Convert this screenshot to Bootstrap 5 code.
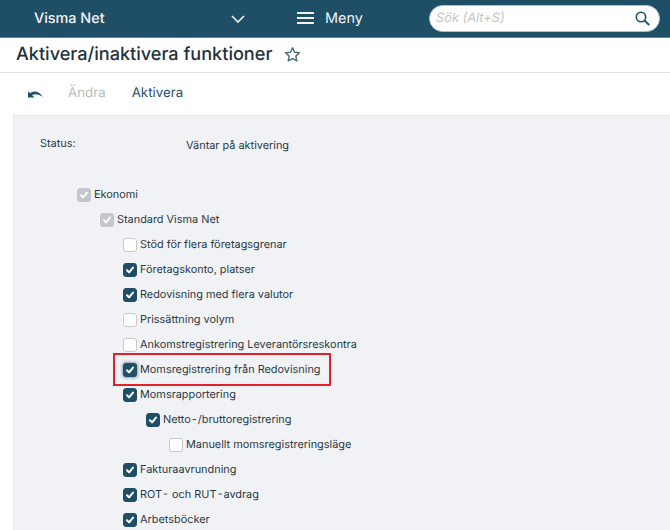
<!DOCTYPE html>
<html lang="sv">
  <head>
    <meta charset="UTF-8" />
    <meta name="viewport" content="width=device-width, initial-scale=1.0" />
    <title>Aktivera/inaktivera funktioner</title>
    <link href="https://cdn.jsdelivr.net/npm/bootstrap@5.3.0/dist/css/bootstrap.min.css" rel="stylesheet" />
    <script src="https://cdn.jsdelivr.net/npm/bootstrap@5.3.0/dist/js/bootstrap.bundle.min.js"></script>
    <style>
      html, body { height: 530px; overflow: hidden; }
      body { font-family: Inter, "Liberation Sans", sans-serif; color: #2b3a45; background: #fff; text-rendering: geometricPrecision; }
      .topbar { height: 38px; background: #1f4e67; border-bottom: 1px solid #5f8296; color: #f2f2f2; font-size: 14.4px; padding: 0 10px 0 34px; }
      .brand-name { width: 197px; font-weight: 500; }
      .menu-btn { margin-left: 52px; gap: 11px; }
      .search-box { width: 231px; height: 27px; background: #fff; border: 1px solid #a9c3d3; border-radius: 14px; padding: 0 9px 0 6px; margin-left: auto; }
      .search-box span { color: #c4c4c4; font-size: 12.8px; font-style: italic; }
      .title-row { height: 35px; border-bottom: 1px solid #e2e2e2; padding: 0 0 1px 16px; }
      .title-row h1 { font-size: 18.1px; font-weight: 500; margin: 0; color: #22323d; }
      .tool-row { height: 42px; padding: 0 0 1px 28px; font-size: 13.3px; }
      .tool-off { color: #bdbdbd; margin-left: 25px; }
      .tool-on { color: #2d4f66; margin-left: 26px; }
      .main-panel { height: 415px; margin-left: 13px; background: #f1f2f5; border-top: 1px solid #e6e7ea; border-left: 1px solid #e6e7ea; font-size: 10.9px; overflow: hidden; }
      .status-row { height: 66px; padding: 20px 0 0 26px; }
      .status-label { width: 146px; margin-top: -1px; }
      .status-value { width: 117px; height: 24px; border-bottom: 1px solid #f5f5f7; margin-top: 1px; }
      .tree-row { height: 25px; line-height: 25px; }
      .lvl-1 { padding-left: 63px; }
      .lvl-2 { padding-left: 86px; }
      .lvl-3 { padding-left: 109px; }
      .lvl-4 { padding-left: 132px; }
      .lvl-5 { padding-left: 155px; }
      .tree-row .form-check-input { width: 14px; height: 14px; margin: 0 3px 0 0; border-color: #c9c9c9; border-radius: 3px; flex: none; position: relative; top: 0.5px; background-size: 100%; }
      .tree-row .form-check-input:checked { background-color: #1f4e67; border-color: #1f4e67; background-image: url("data:image/svg+xml,%3csvg xmlns='http://www.w3.org/2000/svg' viewBox='0 0 20 20'%3e%3cpath fill='none' stroke='%23fff' stroke-linecap='round' stroke-linejoin='round' stroke-width='3.4' d='m5 10.5 3.5 3.5 6.5-8'/%3e%3c/svg%3e"); }
      .tree-row .form-check-input:disabled { opacity: 1; background-color: #c5c6cb; border-color: #c5c6cb; }
      .tree-row .form-check-input.is-focus { box-shadow: 0 0 3px 1px #8aa4b5; }
      .highlight-box { position: absolute; left: 113px; top: 353px; width: 218px; height: 33px; border: 2px solid #e2202a; pointer-events: none; }
    </style>
  </head>
  <body>
    <nav class="topbar d-flex align-items-center">
      <span class="brand-name">Visma Net</span>
      <svg width="14" height="8" viewBox="0 0 14 8" fill="none" stroke="#f2f2f2" stroke-width="1.6"><path d="M1 1l6 6 6-6" /></svg>
      <span class="menu-btn d-flex align-items-center">
        <svg width="17" height="12" viewBox="0 0 17 12" fill="#f2f2f2"><rect width="17" height="2" /><rect y="5" width="17" height="2" /><rect y="10" width="17" height="2" /></svg>
        Meny
      </span>
      <div class="search-box d-flex align-items-center justify-content-between">
        <span>Sök (Alt+S)</span>
        <svg width="15" height="15" viewBox="0 0 15 15" fill="none" stroke="#1f4e67" stroke-width="1.6"><circle cx="6" cy="6" r="4.7" /><path d="M9.6 9.6l4.6 4.4" stroke-width="2" /></svg>
      </div>
    </nav>

    <div class="title-row d-flex align-items-center gap-2">
      <h1>Aktivera/inaktivera funktioner</h1>
      <svg class="ms-1" width="17" height="17" viewBox="0 0 24 24" fill="none" stroke="#4b6b80" stroke-width="2" stroke-linejoin="round"><path d="M12 2.5l2.9 6.3 6.9.8-5.1 4.7 1.4 6.8-6.1-3.4-6.1 3.4 1.4-6.8-5.1-4.7 6.9-.8z" /></svg>
    </div>

    <div class="tool-row d-flex align-items-center">
      <svg width="15" height="8" viewBox="0 0 15 8" fill="#1f4e67"><path d="M0 7.5V1.5L2.3 3.2C5 1 10 0 15 7 11 4 7 3.5 4 5L6.5 7.5z" /></svg>
      <span class="tool-off">Ändra</span>
      <span class="tool-on">Aktivera</span>
    </div>

    <main class="main-panel">
      <div class="status-row d-flex">
        <span class="status-label">Status:</span>
        <span class="status-value">Väntar på aktivering</span>
      </div>
      <div id="tree"></div>
    </main>
    <div class="highlight-box"></div>

    <script>
      const rader = [
        [1, "Ekonomi", "off"],
        [2, "Standard Visma Net", "off"],
        [3, "Stöd för flera företagsgrenar", ""],
        [3, "Företagskonto, platser", "on"],
        [3, "Redovisning med flera valutor", "on"],
        [3, "Prissättning volym", ""],
        [3, "Ankomstregistrering Leverantörsreskontra", ""],
        [3, "Momsregistrering från Redovisning", "focus"],
        [3, "Momsrapportering", "on"],
        [4, "Netto\u200A-\u200A/bruttoregistrering", "on"],
        [5, "Manuellt momsregistreringsläge", ""],
        [3, "Fakturaavrundning", "on"],
        [3, "ROT\u200A-\u200A och RUT\u200A-\u200Aavdrag", "on"],
        [3, "Arbetsböcker", "on"],
      ];
      document.getElementById("tree").innerHTML = rader
        .map(([niva, text, status]) => {
          const attr = status === "off" ? "checked disabled" : status ? "checked" : "";
          const extra = status === "focus" ? " is-focus" : "";
          return `<div class="tree-row d-flex align-items-center lvl-${niva}">
            <input class="form-check-input${extra}" type="checkbox" ${attr} />
            <span>${text}</span>
          </div>`;
        })
        .join("");
    </script>
  </body>
</html>
